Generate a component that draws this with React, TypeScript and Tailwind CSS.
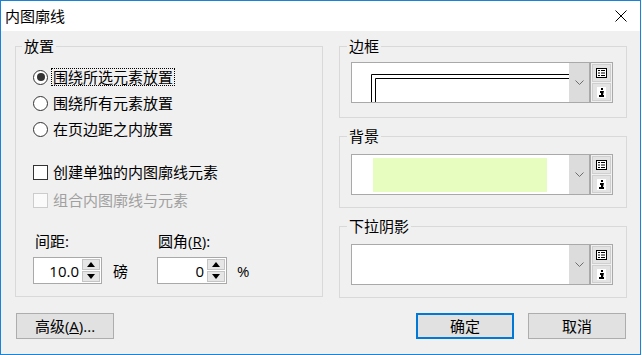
import React from 'react';

const FONT = "font-['Open_Sans','Noto_Sans_CJK_SC',sans-serif]";

function Radio({ checked, focus, children }: { checked?: boolean; focus?: boolean; children: React.ReactNode }) {
  return (
    <div className="flex h-[26px] items-center">
      <span className="flex h-[15px] w-[15px] items-center justify-center rounded-full border border-[#333] bg-white">
        {checked && <span className="h-[8px] w-[8px] rounded-full bg-[#333]" />}
      </span>
      {focus ? (
        <span className="ml-[3px] border border-dotted border-black px-[1px] leading-[16px]">{children}</span>
      ) : (
        <span className="ml-[5px] leading-[16px]">{children}</span>
      )}
    </div>
  );
}

function Check({ disabled, children }: { disabled?: boolean; children: React.ReactNode }) {
  return (
    <div className="flex h-[28px] items-center">
      <span
        className={
          disabled
            ? 'h-[15px] w-[15px] border border-[#cccccc] bg-[#fafafa]'
            : 'h-[15px] w-[15px] border border-[#333] bg-white'
        }
      />
      <span className={disabled ? 'ml-[5px] leading-[16px] text-[#a0a0a0]' : 'ml-[5px] leading-[16px]'}>{children}</span>
    </div>
  );
}

function Arrow({ up }: { up?: boolean }) {
  return (
    <svg width="8" height="5" viewBox="0 0 8 5">
      {up ? <polygon points="0,5 8,5 4,0" fill="black" /> : <polygon points="0,0 8,0 4,5" fill="black" />}
    </svg>
  );
}

function Spin({ value, width }: { value: string; width: string }) {
  return (
    <div className={`flex h-[27px] border border-[#a9a9a9] bg-white ${width}`}>
      <div className="flex flex-1 items-center justify-end pr-[2px] leading-[16px]">{value}</div>
      <div className="flex w-[20px] flex-col gap-[1px] p-[1px]">
        <div className="flex flex-1 items-center justify-center border border-[#c4c4c4] bg-[#e6e6e6]">
          <Arrow up />
        </div>
        <div className="flex flex-1 items-center justify-center border border-[#c4c4c4] bg-[#e6e6e6]">
          <Arrow />
        </div>
      </div>
    </div>
  );
}

function ListIcon() {
  return (
    <svg width="11" height="10" viewBox="0 0 11 10">
      <rect x="0.5" y="0.5" width="10" height="9" fill="white" stroke="black" />
      <rect x="2" y="2" width="2" height="1" fill="black" />
      <rect x="5" y="2" width="4" height="1" fill="black" />
      <rect x="2" y="4.5" width="2" height="1" fill="black" />
      <rect x="5" y="4.5" width="4" height="1" fill="black" />
      <rect x="2" y="7" width="2" height="1" fill="black" />
      <rect x="5" y="7" width="4" height="1" fill="black" />
    </svg>
  );
}

function FigureIcon() {
  return (
    <svg width="9" height="11" viewBox="0 0 9 11">
      <rect x="0" y="0" width="9" height="11" fill="white" />
      <rect x="4" y="1" width="2" height="2" fill="black" />
      <polygon points="3,4 7,4 6,8 7,8 7,10 2,10 2,8 4,8 4,6 3,6" fill="black" />
    </svg>
  );
}

function Combo({ first, children }: { first?: boolean; children?: React.ReactNode }) {
  return (
    <div className={first ? 'ml-[11px] mt-[8px] flex h-[41px]' : 'ml-[11px] mt-[10px] flex h-[41px]'}>
      <div className="flex w-[239px] border border-[#a9a9a9] bg-white">
        <div className="flex-1 overflow-hidden">{children}</div>
        <div className="flex w-[20px] items-center justify-center bg-[#dcdcdc]">
          <svg width="9" height="5" viewBox="0 0 9 5">
            <polyline points="0.5,0.5 4.5,4.5 8.5,0.5" fill="none" stroke="#6d6d6d" strokeWidth="1" />
          </svg>
        </div>
      </div>
      <div className="flex w-[23px] flex-col gap-[1px] border border-[#a9a9a9] p-[1px]">
        <div className="flex flex-1 items-center justify-center border border-[#cfcfcf] bg-[#e3e3e3]">
          <ListIcon />
        </div>
        <div className="flex flex-1 items-center justify-center border border-[#cfcfcf] bg-[#e3e3e3]">
          <FigureIcon />
        </div>
      </div>
    </div>
  );
}

function Group({ title, className, children }: { title: string; className: string; children: React.ReactNode }) {
  return (
    <fieldset className={`border border-[#d9d9d9] ${className}`}>
      <legend className="ml-[7px] px-[2px] text-[15px] leading-[16px]">{title}</legend>
      {children}
    </fieldset>
  );
}

export default function App() {
  return (
    <div className={`h-[355px] w-[641px] bg-white text-[15px] text-black ${FONT}`}>
      <div className="flex h-full flex-col border border-[#1883d7]">
        {/* title bar */}
        <div className="flex h-[30px] items-center justify-between bg-white pl-[4px] pr-[13px]">
          <span className="leading-[16px]">内图廓线</span>
          <svg width="12" height="12" viewBox="0 0 12 12">
            <line x1="0.5" y1="0.5" x2="11.5" y2="11.5" stroke="black" strokeWidth="1" />
            <line x1="11.5" y1="0.5" x2="0.5" y2="11.5" stroke="black" strokeWidth="1" />
          </svg>
        </div>

        <div className="flex flex-1 flex-col bg-[#f0f0f0] pl-[14px] pt-[7px]">
          <div className="flex items-start gap-[16px]">
            {/* placement group */}
            <fieldset className="h-[259px] w-[308px] border border-[#d9d9d9]">
              <legend className="ml-[6px] px-[2px] leading-[16px]">放置</legend>
              <div className="pl-[17px] pt-[10px]">
                <Radio checked focus>围绕所选元素放置</Radio>
                <Radio>围绕所有元素放置</Radio>
                <Radio>在页边距之内放置</Radio>
                <div className="mt-[16px]">
                  <Check>创建单独的内图廓线元素</Check>
                  <Check disabled>组合内图廓线与元素</Check>
                </div>
                <div className="mt-[19px] flex">
                  <div className="w-[124px]">
                    <div className="pl-[2px] leading-[16px]">间距:</div>
                    <div className="mt-[8px] flex items-center">
                      <Spin value="10.0" width="w-[69px]" />
                      <span className="ml-[11px] leading-[16px]">磅</span>
                    </div>
                  </div>
                  <div>
                    <div className="pl-[1px] leading-[16px]">
                      圆角(<u>R</u>):
                    </div>
                    <div className="mt-[8px] flex items-center">
                      <Spin value="0" width="w-[70px]" />
                      <span className="ml-[10px] leading-[16px]">%</span>
                    </div>
                  </div>
                </div>
              </div>
            </fieldset>

            {/* right column */}
            <div className="flex w-[288px] flex-col gap-[10px]">
              <Group title="边框" className="h-[80px]">
                <Combo first>
                  <svg width="217" height="39" viewBox="0 0 217 39">
                    <polyline points="19.5,39 19.5,11.5 217,11.5" fill="none" stroke="black" strokeWidth="1" />
                    <polyline points="23.5,39 23.5,15.5 217,15.5" fill="none" stroke="black" strokeWidth="1" />
                  </svg>
                </Combo>
              </Group>
              <Group title="背景" className="h-[80px]">
                <Combo>
                  <div className="ml-[21px] mt-[3px] h-[34px] w-[174px] bg-[#e7fcbf]" />
                </Combo>
              </Group>
              <Group title="下拉阴影" className="h-[80px]">
                <Combo />
              </Group>
            </div>
          </div>

          {/* buttons */}
          <div className="mt-[15px] flex items-center">
            <button className="ml-[1px] h-[26px] w-[98px] border border-[#adadad] bg-[#e1e1e1] leading-[16px]">
              高级(<u>A</u>)...
            </button>
            <div className="flex-1" />
            <button className="h-[26px] w-[98px] border-2 border-[#0078d7] bg-[#e1e1e1] leading-[16px]">确定</button>
            <button className="ml-[14px] mr-[14px] h-[26px] w-[98px] border border-[#adadad] bg-[#e1e1e1] leading-[16px]">
              取消
            </button>
          </div>
        </div>
      </div>
    </div>
  );
}
